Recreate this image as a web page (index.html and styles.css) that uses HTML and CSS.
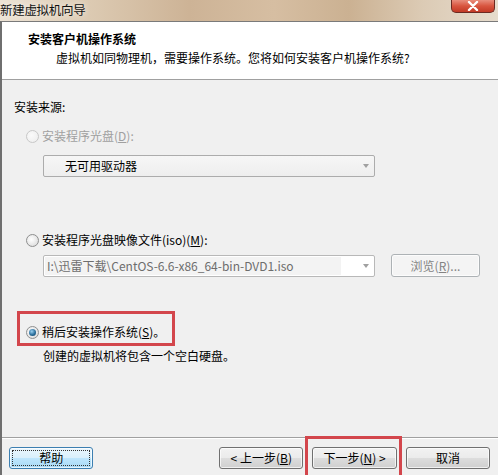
FILE: index.html
```html
<!DOCTYPE html>
<html>
<head>
<meta charset="utf-8">
<link rel="stylesheet" href="styles.css">
</head>
<body>
<div class="win">
  <div class="titlebar">
    <span class="title">新建虚拟机向导</span>
    <div class="close"><svg width="12" height="10" viewBox="0 0 12 10"><path d="M2 1 L10 9 M10 1 L2 9" stroke="#fff" stroke-width="2.4" stroke-linecap="round"/></svg></div>
  </div>
  <div class="frame">
    <div class="header">
      <div class="h-title">安装客户机操作系统</div>
      <div class="h-sub">虚拟机如同物理机，需要操作系统。您将如何安装客户机操作系统?</div>
    </div>
    <div class="body">
      <div class="label">安装来源:</div>
      <div class="radio-row r1 disabled"><span class="radio"></span><span>安装程序光盘(<u>D</u>):</span></div>
      <div class="combo c1"><span class="combo-text">无可用驱动器</span><span class="arrow"></span></div>
      <div class="radio-row r2"><span class="radio"></span><span>安装程序光盘映像文件(iso)(<u>M</u>):</span></div>
      <div class="iso-row">
        <div class="combo c2"><span class="combo-text grey">I:\迅雷下载\CentOS-6.6-x86_64-bin-DVD1.iso</span><span class="arrow"></span></div>
        <div class="btn browse">浏览(<u>R</u>)...</div>
      </div>
      <div class="radio-row r3"><span class="radio checked"></span><span>稍后安装操作系统(<u>S</u>)。</span></div>
      <div class="note">创建的虚拟机将包含一个空白硬盘。</div>
    </div>
    <div class="footer">
      <div class="btn focus help"><span class="focus-ring">帮助</span></div>
      <div class="spacer"></div>
      <div class="btn">&lt; 上一步(<u>B</u>)</div>
      <div class="btn next">下一步(<u>N</u>) &gt;</div>
      <div class="btn">取消</div>
    </div>
  </div>
  <div class="mark mark1"></div>
  <div class="mark mark2"></div>
</div>
</body>
</html>
```
FILE: styles.css
```css
* { box-sizing: border-box; }
html, body { margin: 0; padding: 0; }
body {
  width: 498px;
  height: 475px;
  overflow: hidden;
  font-family: "Noto Sans CJK SC", "Noto Sans", sans-serif;
  font-size: 12px;
  color: #000;
  background: #f0f0f0;
}
.win {
  position: relative;
  width: 498px;
  height: 475px;
  overflow: hidden;
  display: flex;
  flex-direction: column;
}
.titlebar {
  height: 21px;
  flex: none;
  display: flex;
  align-items: flex-start;
  justify-content: space-between;
  background: linear-gradient(90deg, #ece2d4 0%, #dccab2 18%, #cdb396 38%, #d6bea2 55%, #cbb192 70%, #dccbb5 85%, #e6dccd 100%);
}
.title {
  font-size: 12.5px;
  line-height: 19px;
  padding-left: 0;
  color: #111;
  text-shadow: 0 0 6px rgba(255,255,255,0.9);
  letter-spacing: -0.3px;
}
.close {
  width: 44px;
  height: 13px;
  margin-right: 3px;
  border: 1px solid #6b2a22;
  border-top: none;
  border-radius: 0 0 5px 5px;
  background: linear-gradient(#e88d7c 0%, #d8553f 50%, #c23a26 100%);
  display: flex;
  align-items: center;
  justify-content: center;
}
.frame {
  flex: 1;
  display: flex;
  flex-direction: column;
  border-left: 2px solid #6f6f6f;
  border-top: 1px solid #7a7a7a;
}
.header {
  height: 58px;
  flex: none;
  background: #fff;
  border-bottom: 1px solid #a0a0a0;
  padding: 8px 0 0 26px;
}
.h-title {
  font-weight: bold;
  line-height: 17px;
}
.h-sub {
  line-height: 16px;
  margin-top: 3px;
  padding-left: 28px;
}
.body {
  height: 358px;
  flex: none;
  padding: 19px 0 0 12px;
  border-bottom: 1px solid #a0a0a0;
  box-shadow: 0 1px 0 #fff;
}
.label { line-height: 16px; }
.radio-row {
  display: flex;
  align-items: center;
  line-height: 16px;
  padding-left: 12px;
  gap: 3px;
}
.radio-row.disabled { color: #a0a0a0; }
.r1 { margin-top: 13px; }
.r2 { margin-top: 55px; }
.r3 { margin-top: 47px; }
.radio {
  width: 13px;
  height: 13px;
  border-radius: 50%;
  border: 1px solid #8e8f8f;
  background: radial-gradient(circle at 40% 40%, #ffffff 0%, #e6e6e6 60%, #d0d0d0 100%);
  display: flex;
  align-items: center;
  justify-content: center;
}
.disabled .radio {
  border-color: #c8c8c8;
  background: radial-gradient(circle at 40% 40%, #fafafa 0%, #ececec 100%);
}
.radio.checked::after {
  content: "";
  width: 7px;
  height: 7px;
  border-radius: 50%;
  background: radial-gradient(circle at 40% 35%, #9ad0f0 0%, #2b6f9c 55%, #0c3a5c 100%);
}
.combo {
  height: 22px;
  width: 332px;
  border: 1px solid #acacac;
  border-radius: 2px;
  display: flex;
  align-items: center;
  justify-content: space-between;
  background: linear-gradient(#f6f6f6, #eeeeee);
}
.c1 {
  margin: 11px 0 0 29px;
}
.c1 .combo-text { padding-left: 21px; }
.c2 { background: #fff; border-color: #b8b8b8; }
.c2 .combo-text { padding-left: 2px; color: #6d6d6d; background: #f3f3f3; flex: 1; margin: 1px 22px 1px 1px; line-height: 18px; }
.combo-text { line-height: 18px; }
.arrow {
  width: 0; height: 0;
  margin-right: 5px;
  border-left: 3.5px solid transparent;
  border-right: 3.5px solid transparent;
  border-top: 4px solid #a0a0a0;
}
.iso-row {
  display: flex;
  align-items: center;
  margin: 6px 0 0 29px;
  gap: 16px;
}
.btn {
  width: 86px;
  height: 22px;
  border: 1px solid #707070;
  border-radius: 3px;
  background: linear-gradient(#f2f2f2 0%, #ebebeb 50%, #dddddd 51%, #cfcfcf 100%);
  display: flex;
  align-items: center;
  justify-content: center;
  line-height: 16px;
  box-shadow: inset 0 0 0 1px rgba(255,255,255,0.7);
}
.browse {
  width: 89px;
  height: 23px;
  color: #838383;
  border-color: #adb2b5;
  background: #f4f4f4;
}
.note {
  line-height: 16px;
  margin: 8px 0 0 29px;
}
.footer {
  flex: 1;
  display: flex;
  align-items: flex-start;
  padding: 9px 8px 0 7px;
  gap: 9px;
}
.spacer { width: 110px; }
.help {
  border-color: #3c7fb1;
  background: linear-gradient(#eaf6fd 0%, #d9f0fc 50%, #bee6fd 51%, #a7d9f5 100%);
  padding: 2px;
}
.focus-ring {
  width: 100%;
  height: 100%;
  border: 1px dotted #333;
  display: flex;
  align-items: center;
  justify-content: center;
}
.mark {
  position: absolute;
  border: 3px solid #d3464c;
}
.mark1 {
  left: 17px;
  top: 311px;
  width: 158px;
  height: 35px;
}
.mark2 {
  left: 305px;
  top: 436px;
  width: 97px;
  height: 45px;
}
```
